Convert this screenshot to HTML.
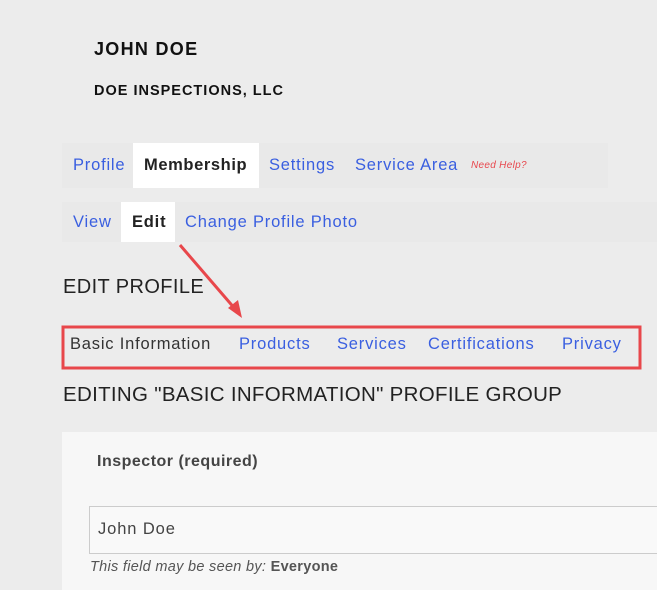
<!DOCTYPE html>
<html><head><style>
body{margin:0;width:657px;height:590px;background:#ececec;font-family:"Liberation Sans",sans-serif;position:relative;overflow:hidden;color:#222}
.a{position:absolute;white-space:nowrap}
.blue{color:#3a5fe0}
.n{font-size:16.5px;letter-spacing:0.8px}
</style></head><body>
<div class="a" style="left:94px;top:39px;font-size:18px;font-weight:bold;color:#111;letter-spacing:1.3px">JOHN DOE</div>
<div class="a" style="left:94px;top:83px;font-size:14.5px;font-weight:bold;color:#111;letter-spacing:1px">DOE INSPECTIONS, LLC</div>

<div class="a" style="left:62px;top:143px;width:546px;height:45px;background:#e9e9e9"></div>
<div class="a" style="left:133px;top:143px;width:126px;height:45px;background:#fff"></div>
<div class="a blue n" style="left:73px;top:156px">Profile</div>
<div class="a n" style="left:144px;top:156px;font-weight:bold;color:#222;letter-spacing:0.6px">Membership</div>
<div class="a blue n" style="left:269px;top:156px">Settings</div>
<div class="a blue n" style="left:355px;top:156px">Service Area</div>
<div class="a" style="left:471px;top:160px;font-size:10px;font-style:italic;color:#e8484e;letter-spacing:0.3px">Need Help?</div>

<div class="a" style="left:62px;top:202px;width:595px;height:40px;background:#e9e9e9"></div>
<div class="a" style="left:121px;top:202px;width:54px;height:40px;background:#fff"></div>
<div class="a blue n" style="left:73px;top:213px">View</div>
<div class="a n" style="left:132px;top:213px;font-weight:bold;color:#222">Edit</div>
<div class="a blue n" style="left:185px;top:213px">Change Profile Photo</div>

<div class="a" style="left:63px;top:276px;font-size:20px;color:#222;letter-spacing:0.4px">EDIT PROFILE</div>

<svg class="a" style="left:0;top:0" width="657" height="590">
<line x1="180" y1="245" x2="236" y2="310" stroke="#e8474b" stroke-width="3"/>
<polygon points="242,318 228,308 238,300" fill="#e8474b"/>
<rect x="63" y="327" width="577" height="41" fill="none" stroke="#e8474b" stroke-width="3"/>
</svg>
<div class="a n" style="left:70px;top:335px;color:#333">Basic Information</div>
<div class="a blue n" style="left:239px;top:335px">Products</div>
<div class="a blue n" style="left:337px;top:335px">Services</div>
<div class="a blue n" style="left:428px;top:335px">Certifications</div>
<div class="a blue n" style="left:562px;top:335px">Privacy</div>

<div class="a" style="left:63px;top:383px;font-size:20.5px;color:#222;letter-spacing:0.3px">EDITING "BASIC INFORMATION" PROFILE GROUP</div>

<div class="a" style="left:62px;top:432px;width:595px;height:158px;background:#f7f7f7"></div>
<div class="a" style="left:97px;top:453px;font-size:16px;font-weight:bold;color:#444;letter-spacing:0.5px">Inspector (required)</div>
<div class="a" style="left:89px;top:506px;width:570px;height:46px;border:1px solid #ccc;background:#f9f9f9"></div>
<div class="a" style="left:98px;top:520px;font-size:16.5px;color:#444;letter-spacing:0.9px">John Doe</div>
<div class="a" style="left:90px;top:559px;font-size:14.5px;color:#555;letter-spacing:0.3px"><i>This field may be seen by:</i> <b>Everyone</b></div>
</body></html>
